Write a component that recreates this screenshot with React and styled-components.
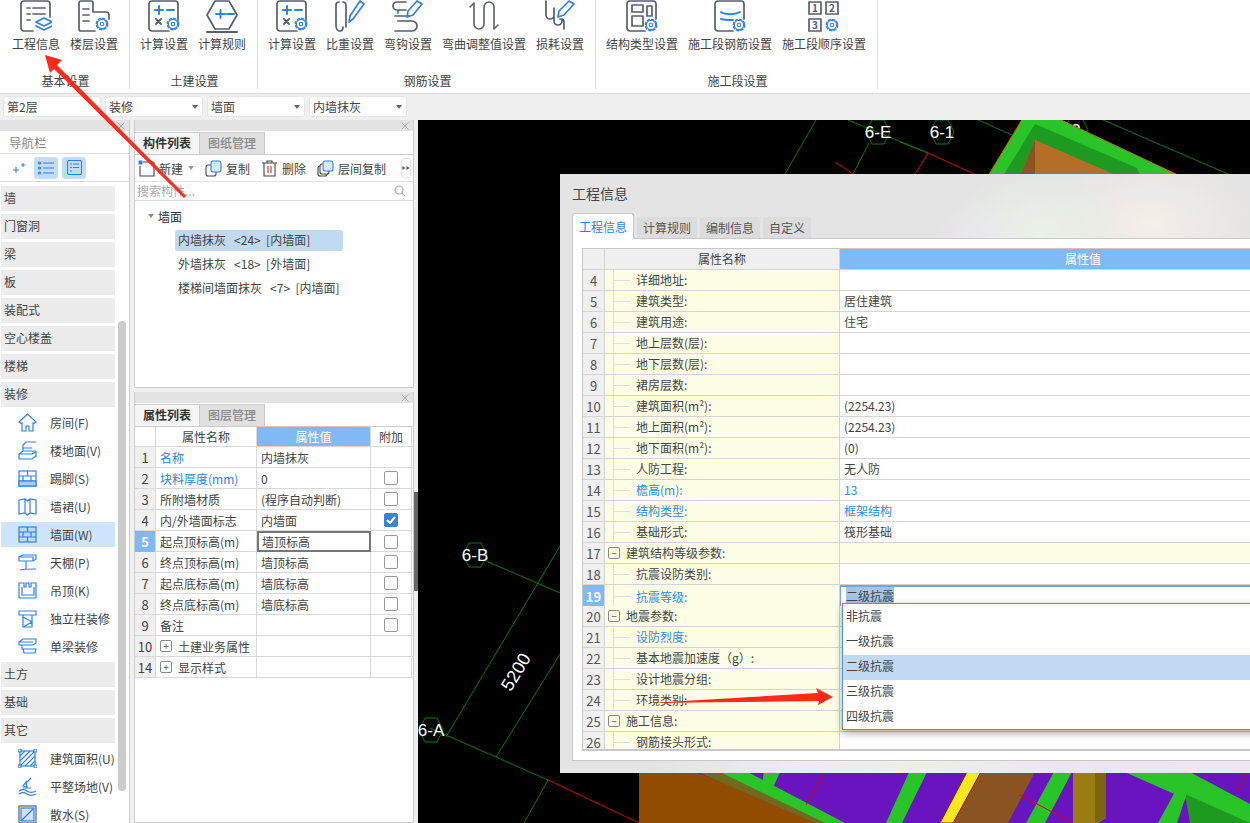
import { createGlobalStyle, styled } from "styled-components"

const DARK = "#575e6e"
const BLUE = "#2f80ed"
const FONT = `"Noto Sans CJK SC", "Liberation Sans", sans-serif`

const GlobalStyle = createGlobalStyle`
    html, body {
        margin: 0;
        padding: 0;
        background: #f0f0f0;
    }
    * {
        box-sizing: border-box;
    }
`

const Page = styled.div`
    position: relative;
    width: 1250px;
    height: 823px;
    overflow: hidden;
    display: flex;
    flex-direction: column;
    font-family: ${FONT};
    font-size: 12px;
    color: #333;
    background: #f0f0f0;
`

/* ribbon */
const Ribbon = styled.div`
    height: 94px;
    flex: none;
    display: flex;
    background: #fff;
    border-bottom: 1px solid #dcdcdc;
`

const RibbonGroup = styled.div`
    width: ${(props) => props.$width}px;
    height: 89px;
    flex: none;
    display: flex;
    flex-direction: column;
    border-right: 1px solid #dcdcdc;
    padding-left: ${(props) => props.$pad}px;
`

const RibbonItems = styled.div`
    display: flex;
    height: 73px;
`

const RibbonItem = styled.div`
    display: flex;
    flex-direction: column;
    align-items: center;
    padding: 0 5px;
    white-space: nowrap;
`

const RibbonLabel = styled.span`
    margin-top: 3px;
    line-height: 16px;
    color: #444;
`

const RibbonTitle = styled.div`
    height: 15px;
    line-height: 15px;
    text-align: center;
    color: #444;
    margin-left: ${(props) => 2 - props.$pad}px;
`

const RibbonSvg = styled.svg`
    width: 32px;
    height: 33px;
    display: block;
    fill: none;
    stroke-width: 1.7;
    stroke-linecap: round;
    stroke-linejoin: round;
`

/* filter bar */
const FilterBar = styled.div`
    height: 26px;
    flex: none;
    display: flex;
    gap: 4px;
    padding: 2px 3px 3px;
`

const Select = styled.div`
    width: 98px;
    height: 21px;
    display: flex;
    align-items: center;
    justify-content: space-between;
    padding: 0 4px 0 3px;
    background: #fff;
    border-radius: 3px;
    border: 1px solid #e6e6e6;
    color: #444;
`

const Caret = styled.span`
    width: 0;
    height: 0;
    border-left: 3px solid transparent;
    border-right: 3px solid transparent;
    border-top: 4px solid ${(props) => props.$color || "#666"};
    margin-left: ${(props) => props.$left || 0}px;
    margin-right: ${(props) => props.$right || 0}px;
`

/* work area */
const Work = styled.div`
    flex: 1;
    min-height: 0;
    display: flex;
`

const Nav = styled.div`
    position: relative;
    width: 130px;
    flex: none;
    background: #fff;
    border-right: 1px solid #ccc;
    overflow: hidden;
`

const PanelBar = styled.div`
    height: 11px;
    background: #e3e3e3;
    display: flex;
    justify-content: flex-end;
    align-items: center;
    padding-right: 4px;
`

const CloseSvg = styled.svg`
    width: 8px;
    height: 8px;
    fill: none;
    stroke: #aaa;
    stroke-width: 1;
`

const NavTitle = styled.div`
    height: 23px;
    line-height: 23px;
    padding-left: 9px;
    color: #888;
    font-size: 12.5px;
    border-bottom: 1px solid #ddd;
`

const NavTools = styled.div`
    height: 28px;
    display: flex;
    align-items: center;
    gap: 4px;
    padding-left: 7px;
    border-bottom: 1px solid #ddd;
`

const ToolToggle = styled.div`
    width: 24px;
    height: 22px;
    display: flex;
    align-items: center;
    justify-content: center;
    border-radius: 3px;
    background: ${(props) => (props.$on ? "#c2dcf5" : "transparent")};
    margin-right: ${(props) => props.$gap || 0}px;
`

const NavList = styled.div`
    display: flex;
    flex-direction: column;
    gap: 3px;
    padding: 4px 0 0 1px;
    width: 115px;
`

const NavHead = styled.div`
    height: 25px;
    line-height: 24px;
    padding-left: 3px;
    background: #ececec;
    color: #444;
    white-space: nowrap;
`

const NavItem = styled.div`
    height: 25px;
    display: flex;
    align-items: center;
    gap: 13px;
    padding-left: 17px;
    padding-bottom: 1px;
    white-space: nowrap;
    background: ${(props) => (props.$active ? "#cfe5fd" : "transparent")};
    color: #444;
`

const NavSvg = styled.svg`
    width: 19px;
    height: 19px;
    flex: none;
    fill: none;
    stroke: ${BLUE};
    stroke-width: 1.2;
`

const NavScroll = styled.div`
    position: absolute;
    left: 118px;
    top: 201px;
    width: 8px;
    height: 470px;
    border-radius: 4px;
    background: #cbcbcb;
`

const Middle = styled.div`
    width: 280px;
    flex: none;
    margin-left: 4px;
    display: flex;
    flex-direction: column;
    gap: 4px;
`

const Panel = styled.div`
    background: #fff;
    border: 1px solid #ccc;
    border-top: none;
    height: ${(props) => props.$height}px;
    overflow: hidden;
`

const Tabs = styled.div`
    height: 23px;
    display: flex;
    background: #fff;
    border-bottom: 1px solid #ccc;
    margin-top: 1px;
`

const Tab = styled.div`
    width: 65px;
    height: 22px;
    line-height: 20px;
    text-align: center;
    font-size: 12px;
    font-weight: ${(props) => (props.$active ? 700 : 500)};
    color: ${(props) => (props.$active ? "#333" : "#8a8a8a")};
    background: ${(props) => (props.$active ? "#f5f5f5" : "#e0e0e0")};
    border-right: 1px solid #ccc;
    border-top: 1px solid #ccc;
`

const ToolRow = styled.div`
    height: 27px;
    display: flex;
    align-items: center;
    padding-left: 3px;
    white-space: nowrap;
    color: #444;
    border-bottom: 1px solid #e2e2e2;
`

const Tool = styled.div`
    display: flex;
    align-items: center;
    gap: 4px;
    margin-right: ${(props) => props.$gap}px;
`

const ToolSvg = styled.svg`
    width: 17px;
    height: 17px;
    fill: none;
    stroke-width: 1.1;
`

const MoreButton = styled.svg`
    width: 10px;
    height: 20px;
    border: 1px solid #e4e4e4;
    border-radius: 3px;
    fill: #555;
`

const Search = styled.div`
    height: 19px;
    display: flex;
    align-items: center;
    justify-content: space-between;
    padding: 0 8px 2px 2px;
    color: #aaa;
    font-size: 12px;
    border-bottom: 1px solid #ddd;
`

const Tree = styled.div`
    display: flex;
    flex-direction: column;
    padding: 3px 0 0 13px;
`

const TreeRoot = styled.div`
    height: 24px;
    display: flex;
    align-items: center;
    gap: 4px;
`

const TreeItem = styled.div`
    width: 168px;
    height: 21px;
    margin: 2px 0 1px 27px;
    padding-left: 3px;
    line-height: 20px;
    border-radius: 3px;
    white-space: pre;
    color: #444;
    background: ${(props) => (props.$active ? "#c2d9f2" : "transparent")};
`

const PropRow = styled.div`
    display: grid;
    grid-template-columns: 21px 101px 114px 41px;
    height: ${(props) => props.$height || 21}px;
    border-bottom: 1px solid #d8d8d8;
`

const PropCell = styled.div`
    display: flex;
    align-items: center;
    justify-content: ${(props) => (props.$center ? "center" : "flex-start")};
    padding-left: ${(props) => (props.$center ? 0 : 4)}px;
    border-right: 1px solid #d8d8d8;
    white-space: nowrap;
    color: ${(props) => (props.$blue ? BLUE : "#444")};
    background: ${(props) => (props.$head ? "#7fbaf7" : "transparent")};
    ${(props) => props.$head && "color: #fff;"}
    ${(props) => props.$focus && "border: 2px solid #777; padding-left: 3px;"}
`

const NumCell = styled.div`
    display: flex;
    align-items: center;
    justify-content: center;
    font-size: 13px;
    background: ${(props) => (props.$active ? "#7fbaf7" : "#f0f0f0")};
    color: ${(props) => (props.$active ? "#fff" : "#444")};
    font-weight: ${(props) => (props.$active ? 700 : 400)};
    border-right: 1px solid #d8d8d8;
`

const Check = styled.span`
    width: 14px;
    height: 14px;
    display: flex;
    align-items: center;
    justify-content: center;
    border-radius: 2px;
    border: 1px solid ${(props) => (props.$on ? "#3b82d6" : "#999")};
    background: ${(props) => (props.$on ? "#3b82d6" : "#fff")};
`

const ExpandBox = styled.span`
    width: 12px;
    height: 12px;
    flex: none;
    display: flex;
    align-items: center;
    justify-content: center;
    border: 1px solid #888;
    border-radius: 2px;
    font-size: 10px;
    line-height: 10px;
    color: #555;
    background: ${(props) => props.$bg || "#fff"};
    margin-right: ${(props) => props.$gap}px;
    margin-left: ${(props) => props.$left}px;
`

const Splitter = styled.div`
    width: 4px;
    flex: none;
    display: flex;
    align-items: center;
    margin-top: 372px;
    height: 99px;
    background: #666;
`

/* canvas and dialog */
const Canvas = styled.div`
    position: relative;
    flex: 1;
    background: #000;
    overflow: hidden;
`

const CanvasSvg = styled.svg`
    display: block;
    width: 832px;
    height: 703px;
`

const Dialog = styled.div`
    position: absolute;
    left: 142px;
    top: 54px;
    width: 800px;
    height: 599px;
    padding-top: 10px;
    background-color: #e4e4e4;
    background-image:
        linear-gradient(90deg, transparent 12%, #f0eaf4 30%, #efefe6 45%, #ece6f2 62%, #eee8f2 100%),
        radial-gradient(ellipse 90px 70px at 480px 60px, #e9f2e6 0%, transparent 100%),
        radial-gradient(ellipse 110px 70px at 590px 50px, #f5eee8 0%, transparent 100%),
        radial-gradient(ellipse 70px 40px at 440px 65px, #ece4f4 0%, transparent 100%);
    background-repeat: no-repeat;
    background-size: 100% 12px, 100% 100%, 100% 100%, 100% 100%;
    background-position: bottom, 0 0, 0 0, 0 0;
`

const DialogTitle = styled.div`
    height: 18px;
    line-height: 18px;
    margin-left: 12px;
    font-size: 14px;
    color: #444;
`

const DialogTabs = styled.div`
    display: flex;
    align-items: flex-end;
    gap: 3px;
    height: 25px;
    margin: 12px 0 0 12px;
    border-bottom: 1px solid #c8c8c8;
`

const DialogTab = styled.div`
    padding: 0 6px;
    height: ${(props) => (props.$active ? 25 : 21)}px;
    line-height: ${(props) => (props.$active ? 25 : 21)}px;
    background: ${(props) => (props.$active ? "#fff" : "#dcdcdc")};
    color: ${(props) => (props.$active ? BLUE : "#555")};
    border-radius: 3px 3px 0 0;
    ${(props) => props.$active && "border: 1px solid #c8c8c8; border-bottom: none; margin-bottom: -1px; height: 26px;"}
`

const DialogBody = styled.div`
    height: 522px;
    margin-left: 12px;
    padding: 9px 0 0 9px;
    background: #fff;
    border-bottom: 1px solid #c8c8c8;
    border-left: 1px solid #c8c8c8;
`

const InfoTable = styled.div`
    width: 740px;
    height: 503px;
    overflow: hidden;
    border-top: 1px solid #c8c8c8;
    border-left: 1px solid #c8c8c8;
    border-bottom: 2px solid #c8c8c8;
`

const InfoRow = styled.div`
    display: grid;
    grid-template-columns: 22px 235px 1fr;
    height: 21px;
    flex: none;
    border-bottom: 1px solid #d4d4d4;
`

const InfoNum = styled.div`
    display: flex;
    align-items: center;
    justify-content: center;
    font-size: 13px;
    background: ${(props) => (props.$active ? "#7fbaf7" : "#f0f0f0")};
    color: ${(props) => (props.$active ? "#fff" : "#555")};
    font-weight: ${(props) => (props.$active ? 700 : 400)};
    border-right: 1px solid #d4d4d4;
`

const InfoName = styled.div`
    display: flex;
    align-items: center;
    line-height: 18px;
    background: ${(props) => (props.$head ? "#f0f0f0" : "#fefde6")};
    justify-content: ${(props) => (props.$head ? "center" : "flex-start")};
    border-right: 1px solid #d4d4d4;
    color: ${(props) => (props.$blue ? "#2a8cf0" : "#444")};
    white-space: nowrap;
`

const TreeGuide = styled.span`
    width: 17px;
    height: 100%;
    flex: none;
    margin: 0 6px 0 8px;
    border-left: 1px solid #e4e2cc;
    background: linear-gradient(#ddd, #ddd) no-repeat center / 100% 1px;
`

const InfoValue = styled.div`
    display: flex;
    align-items: center;
    justify-content: ${(props) => (props.$head ? "center" : "flex-start")};
    padding-left: 4px;
    padding-bottom: 1px;
    white-space: nowrap;
    color: ${(props) => (props.$head ? "#fff" : props.$blue ? "#2a8cf0" : "#444")};
    background: ${(props) => (props.$head ? "#7fbaf7" : props.$group ? "#fefde6" : "#fff")};
    ${(props) => props.$editing && "border-top: 2px solid #6fa8e0; border-left: 1px solid #6fa8e0; padding-left: 5px; padding-bottom: 4px;"}
`

const Selected = styled.span`
    background: #a4c4ea;
    color: #444;
`

const Dropdown = styled.div`
    position: absolute;
    left: 282px;
    top: 429px;
    width: 520px;
    height: 127px;
    padding: 1px 0;
    background: #fff;
    border: 1px solid #4a9cc8;
    box-shadow: 0 3px 8px rgba(0, 0, 0, 0.35);
`

const DropdownItem = styled.div`
    height: 25px;
    line-height: 22px;
    padding-left: 3px;
    color: #444;
    background: ${(props) => (props.$active ? "#c2d9f2" : "transparent")};
`

const ArrowLayer = styled.svg`
    position: absolute;
    left: 0;
    top: 0;
    width: 1250px;
    height: 823px;
    pointer-events: none;
`

const Gear = ({ x, y }) => (
    <g stroke={BLUE} fill="#fff">
        <circle cx={x} cy={y} r="5.6" strokeWidth="1.6" strokeDasharray="2.2 2.2" />
        <circle cx={x} cy={y} r="4.6" strokeWidth="1.1" />
        <circle cx={x} cy={y} r="1.8" strokeWidth="1.1" />
    </g>
)

const CalcIcon = () => (
    <RibbonSvg viewBox="0 0 32 33">
        <path d="M21 31H4a3 3 0 0 1-3-3V4a3 3 0 0 1 3-3h23a3 3 0 0 1 3 3v16" stroke={DARK} />
        <path d="M7 10h8M11 6v8M19 10h7" stroke={BLUE} strokeWidth="2" />
        <path d="M8 19l5 5M13 19l-5 5" stroke={DARK} strokeWidth="2" />
        <Gear x={25} y={24} />
    </RibbonSvg>
)

const icons = {
    info: (
        <RibbonSvg viewBox="0 0 32 33">
            <path d="M13 31H4a3 3 0 0 1-3-3V4a3 3 0 0 1 3-3h23a3 3 0 0 1 3 3v13" stroke={DARK} />
            <path d="M7 8h3M13 8h12M7 14h3M13 14h12M7 20h3" stroke={DARK} />
            <path d="M16 22l8-4 8 4-8 4zM16 26l8 4 8-4" stroke={BLUE} fill="#fff" />
        </RibbonSvg>
    ),
    floor: (
        <RibbonSvg viewBox="0 0 32 33">
            <path d="M17 31H3a2 2 0 0 1-2-2V3a2 2 0 0 1 2-2h10a2 2 0 0 1 2 2v9h13a3 3 0 0 1 3 3v4" stroke={DARK} />
            <path d="M5 9h6M5 15h6M5 21h6" stroke={DARK} />
            <Gear x={24} y={24} />
        </RibbonSvg>
    ),
    calc: <CalcIcon />,
    rule: (
        <RibbonSvg viewBox="0 0 32 33">
            <path d="M9 1h14l8 14-8 14H9L1 15z" stroke={DARK} />
            <path d="M10 14h9M14.500 10v8M21 14h7" stroke={BLUE} strokeWidth="2" />
            <path d="M1 32h30" stroke={DARK} strokeWidth="2" />
        </RibbonSvg>
    ),
    weight: (
        <RibbonSvg viewBox="0 0 32 33">
            <path d="M5 2c-3 0-3 2-3 4v20c0 3 2 5 4 5s3-2 3-4M9 2c3 0 3 2 3 4v21" stroke={DARK} />
            <path d="M17 24l1-6L28 3l4 3-11 15z" stroke={BLUE} transform="translate(-2 -2)" />
        </RibbonSvg>
    ),
    hook: (
        <RibbonSvg viewBox="0 0 32 33">
            <path d="M14 2H5a3 3 0 0 0 0 8h9M3 16h14M6 21h14a4 4 0 0 1 0 10H3" stroke={DARK} />
            <path d="M15 17l1-6L25 1l5 3-9 11z" stroke={BLUE} />
            <path d="M6 13v-3" stroke={BLUE} />
        </RibbonSvg>
    ),
    bend: (
        <RibbonSvg viewBox="0 0 32 33">
            <path d="M2 7l4-4v21a5 5 0 0 0 10 0V7a5 5 0 0 1 10 0v22l4-4" stroke={DARK} strokeWidth="1.6" />
        </RibbonSvg>
    ),
    loss: (
        <RibbonSvg viewBox="0 0 32 33">
            <path d="M2 1v14a4 4 0 0 0 8 0V8M10 8v13a4 4 0 0 0 8 0v-2M16 19h1a3 3 0 0 1 3 3v7" stroke={DARK} />
            <path d="M14 17l1-6L25 1l5 3-10 11z" stroke={BLUE} />
        </RibbonSvg>
    ),
    struct: (
        <RibbonSvg viewBox="0 0 32 33">
            <path d="M19 31H4a3 3 0 0 1-3-3V4a3 3 0 0 1 3-3h23a3 3 0 0 1 3 3v15" stroke={DARK} />
            <rect x="6" y="5" width="11" height="7" stroke={DARK} />
            <rect x="6" y="16" width="11" height="10" stroke={DARK} />
            <rect x="21" y="6" width="5" height="10" stroke={DARK} />
            <Gear x={25} y={25} />
        </RibbonSvg>
    ),
    rebar: (
        <RibbonSvg viewBox="0 0 32 33">
            <path d="M19 31H4a3 3 0 0 1-3-3V4a3 3 0 0 1 3-3h23a3 3 0 0 1 3 3v15" stroke={DARK} />
            <path d="M7 12c4 3 14 3 19 0M7 19c4 1 9 1 12 1" stroke={BLUE} strokeWidth="2" />
            <Gear x={25} y={25} />
        </RibbonSvg>
    ),
    order: (
        <RibbonSvg viewBox="0 0 32 33">
            <rect x="1" y="2" width="12" height="12" stroke={DARK} />
            <rect x="18" y="2" width="12" height="12" stroke={DARK} />
            <rect x="1" y="19" width="12" height="12" stroke={DARK} />
            <text x="7" y="12" fontSize="10" textAnchor="middle" fill={DARK} fontWeight="700">1</text>
            <text x="24" y="12" fontSize="10" textAnchor="middle" fill={DARK} fontWeight="700">2</text>
            <text x="7" y="29" fontSize="10" textAnchor="middle" fill={DARK} fontWeight="700">3</text>
            <Gear x={24} y={25} />
        </RibbonSvg>
    ),
}

const ribbonGroups = [
    { title: "基本设置", width: 130, pad: 7, items: [["工程信息", "info"], ["楼层设置", "floor"]] },
    { title: "土建设置", width: 128, pad: 5, items: [["计算设置", "calc"], ["计算规则", "rule"]] },
    {
        title: "钢筋设置",
        width: 338,
        pad: 5,
        items: [["计算设置", "calc"], ["比重设置", "weight"], ["弯钩设置", "hook"], ["弯曲调整值设置", "bend"], ["损耗设置", "loss"]],
    },
    {
        title: "施工段设置",
        width: 282,
        pad: 5,
        items: [["结构类型设置", "struct"], ["施工段钢筋设置", "rebar"], ["施工段顺序设置", "order"]],
    },
]

const navIcons = {
    room: <path d="M9.500 1L1 9l2 1.500L4 10v8h4v-5h3v5h4v-8l1 .5L18 9z" />,
    floor: <path d="M1 18v-5h13l4-2v4l-4 3zM1 13l4-3h13M5 10V4l3-3h10M5 7h9" />,
    skirt: (
        <>
            <rect x="1" y="2" width="17" height="15" />
            <path d="M1 7h17M1 12h17M9.500 2v5M5 7v5M13 7v5" />
            <rect x="1" y="12" width="17" height="5" fill="#a9cdf5" />
        </>
    ),
    dado: <path d="M1 3l6-1 2.500 2 2.500-2 6 1v14l-6-1-2.500 2-2.500-2-6 1zM7 2v14M12 2v14" />,
    wall: (
        <>
            <rect x="1" y="2" width="17" height="15" fill="#bcd9f8" />
            <path d="M1 7h17M1 12h17M9.500 2v5M5 7v5M13 7v5M9.500 12v5" />
        </>
    ),
    ceiling: <path d="M1 4l4-2h13v4l-3 2H1zM1 4h14v4M8 8v8M2 17c3-1 10-1 16-1" />,
    drop: <path d="M1 2h5v4h2V2h3v4h2V2h5v15H1zM4 6v8h12V6" />,
    column: <path d="M1 2h17v4H1zM5 6v12h9V6M5 8l9 5-9 5" />,
    beam: <path d="M1 5l4-3h13v4l-3 2H1zM1 5h14M4 8v4h14l-1 4H6l-1-4" />,
    area: (
        <>
            <rect x="2" y="2" width="15" height="15" />
            <path d="M2 7l5-5M2 12l10-10M2 17L17 2M7 17l10-10M12 17l5-5" />
            <path d="M0 0h3v3H0zM16 0h3v3h-3zM0 16h3v3H0zM16 16h3v3h-3z" fill="#fff" />
        </>
    ),
    site: <path d="M13 1L7 7M8 5l-3 4 4 1zM1 14c3-2 5-2 8 0s5 2 9 0M1 17c3-2 5-2 8 0s5 2 9 0M5 11h8" />,
    apron: (
        <>
            <rect x="1" y="1" width="17" height="17" stroke={DARK} />
            <rect x="3" y="3" width="13" height="13" fill="#cfe3fb" />
            <path d="M3 16L16 3" />
        </>
    ),
}

const NavIcon = ({ name }) => <NavSvg viewBox="0 0 19 19">{navIcons[name]}</NavSvg>

const navData = [
    { head: "墙" },
    { head: "门窗洞" },
    { head: "梁" },
    { head: "板" },
    { head: "装配式" },
    { head: "空心楼盖" },
    { head: "楼梯" },
    { head: "装修" },
    { name: "房间(F)", icon: "room" },
    { name: "楼地面(V)", icon: "floor" },
    { name: "踢脚(S)", icon: "skirt" },
    { name: "墙裙(U)", icon: "dado" },
    { name: "墙面(W)", icon: "wall", active: true },
    { name: "天棚(P)", icon: "ceiling" },
    { name: "吊顶(K)", icon: "drop" },
    { name: "独立柱装修", icon: "column" },
    { name: "单梁装修", icon: "beam" },
    { head: "土方" },
    { head: "基础" },
    { head: "其它" },
    { name: "建筑面积(U)", icon: "area" },
    { name: "平整场地(V)", icon: "site" },
    { name: "散水(S)", icon: "apron" },
]

const propData = [
    { no: 1, name: "名称", value: "内墙抹灰", blue: true },
    { no: 2, name: "块料厚度(mm)", value: "0", blue: true, check: false },
    { no: 3, name: "所附墙材质", value: "(程序自动判断)", check: false },
    { no: 4, name: "内/外墙面标志", value: "内墙面", check: true },
    { no: 5, name: "起点顶标高(m)", value: "墙顶标高", check: false, active: true },
    { no: 6, name: "终点顶标高(m)", value: "墙顶标高", check: false },
    { no: 7, name: "起点底标高(m)", value: "墙底标高", check: false },
    { no: 8, name: "终点底标高(m)", value: "墙底标高", check: false },
    { no: 9, name: "备注", value: "", check: false },
    { no: 10, name: "土建业务属性", group: true },
    { no: 14, name: "显示样式", group: true },
]

const infoData = [
    { no: 4, name: "详细地址:" },
    { no: 5, name: "建筑类型:", value: "居住建筑" },
    { no: 6, name: "建筑用途:", value: "住宅" },
    { no: 7, name: "地上层数(层):" },
    { no: 8, name: "地下层数(层):" },
    { no: 9, name: "裙房层数:" },
    { no: 10, name: "建筑面积(m²):", value: "(2254.23)" },
    { no: 11, name: "地上面积(m²):", value: "(2254.23)" },
    { no: 12, name: "地下面积(m²):", value: "(0)" },
    { no: 13, name: "人防工程:", value: "无人防" },
    { no: 14, name: "檐高(m):", value: "13", blue: true },
    { no: 15, name: "结构类型:", value: "框架结构", blue: true },
    { no: 16, name: "基础形式:", value: "筏形基础" },
    { no: 17, name: "建筑结构等级参数:", group: true },
    { no: 18, name: "抗震设防类别:" },
    { no: 19, name: "抗震等级:", blue: true, editing: true },
    { no: 20, name: "地震参数:", group: true },
    { no: 21, name: "设防烈度:", blue: true },
    { no: 22, name: "基本地震加速度（g）:" },
    { no: 23, name: "设计地震分组:" },
    { no: 24, name: "环境类别:" },
    { no: 25, name: "施工信息:", group: true },
    { no: 26, name: "钢筋接头形式:" },
]

const Hex = ({ x, y, r, label }) => (
    <g>
        <path
            d={`M${x - r} ${y}l${r * 0.5} ${-r}h${r}l${r * 0.5} ${r}l${-r * 0.5} ${r}h${-r}z`}
            stroke="#0b7a0b"
            fill="none"
        />
        <text x={x} y={y + 6} fill="#fff" fontSize="17" textAnchor="middle" fontFamily="Liberation Sans, sans-serif">
            {label}
        </text>
    </g>
)

const SceneDrawing = () => (
    <CanvasSvg viewBox="418 120 832 703">
        <g stroke="#0b7a0b" strokeWidth="1" fill="none">
            <path d="M816 120L785 174M869 143L853 174M848 120L928 153M900 142L928 153M978 120L1012 135M1103 120L1228 174" />
            <path d="M486 561L560 593M560 546L446 737M560 654L496 757M430 728L548 780L524 823" />
        </g>
        <g stroke="#e00000" strokeWidth="1" fill="none">
            <path d="M928 153L915 174M928 153L974 174M835 162L853 174M548 780L639 823" />
        </g>
        <Hex x={878} y={132} r={12} label="6-E" />
        <Hex x={942} y={132} r={12} label="6-1" />
        <Hex x={1076} y={130} r={12} label="3" />
        <Hex x={475} y={555} r={12} label="6-B" />
        <Hex x={431} y={730} r={12} label="6-A" />
        <text
            x="516"
            y="678"
            fill="#fff"
            fontSize="18"
            textAnchor="middle"
            fontFamily="Liberation Sans, sans-serif"
            transform="rotate(-59 516 672)"
        >
            5200
        </text>

        <path d="M1023 118L1057 118L1180 176L988 176Z" fill="#28c428" stroke="#c86a10" />
        <path d="M1035 124L1137 168L1140 176L1003 176Z" fill="#1f9a20" />
        <path d="M1035 140L1118 176L1020 176Z" fill="#b56e28" />
        <path d="M1020 176L1035 140V176Z" fill="#8c5420" />

        <path d="M639 760H1250V823H639Z" fill="#6a14c0" />
        <path d="M639 760H660L840 823H639Z" fill="#914c00" />
        <path d="M670 760H700L840 823H815Z" fill="#6e6a20" />
        <path d="M695 760H725L845 823H825Z" fill="#28c428" />
        <path d="M764 770H781L771 792H761Z" fill="#28c428" />
        <path d="M910 770H928L902 823H886Z" fill="#28c428" />
        <path d="M982 770H1036L1008 823H953Z" fill="#8a5420" />
        <path d="M968 770H982L953 823H940Z" fill="#ffe820" stroke="#a01010" />
        <path d="M1055 770H1073L1045 823H1026Z" fill="#28c428" />
        <path d="M1073 770H1106V818L1098 823H1073Z" fill="#9a7d10" />
        <path d="M1095 770H1106V818L1095 823Z" fill="#7a6510" />
        <path d="M1120 770H1186L1250 804V823H1240Z" fill="#28c428" />
        <path d="M1185 794L1250 823H1190Z" fill="#1f9a20" />
        <path d="M1176 790H1188L1177 823H1158Z" fill="#28c428" />
        <path d="M824 773L806 805M1020 795L1073 823M1245 773L1238 790" stroke="#e00000" fill="none" />
    </CanvasSvg>
)

const CloseIcon = () => (
    <CloseSvg viewBox="0 0 8 8">
        <path d="M0.500 0.500l7 7M7.500 0.500l-7 7" />
    </CloseSvg>
)

export default () => {
    return (
        <Page>
            <GlobalStyle />
            <Ribbon>
                {ribbonGroups.map((group) => (
                    <RibbonGroup key={group.title} $width={group.width} $pad={group.pad}>
                        <RibbonItems>
                            {group.items.map(([label, icon]) => (
                                <RibbonItem key={label}>
                                    {icons[icon]}
                                    <RibbonLabel>{label}</RibbonLabel>
                                </RibbonItem>
                            ))}
                        </RibbonItems>
                        <RibbonTitle $pad={group.pad}>{group.title}</RibbonTitle>
                    </RibbonGroup>
                ))}
            </Ribbon>

            <FilterBar>
                <Select>第2层</Select>
                <Select>装修<Caret /></Select>
                <Select>墙面<Caret /></Select>
                <Select>内墙抹灰<Caret /></Select>
            </FilterBar>

            <Work>
                <Nav>
                    <PanelBar><CloseIcon /></PanelBar>
                    <NavTitle>导航栏</NavTitle>
                    <NavTools>
                        <ToolToggle $gap={-1}>
                            <svg width="12" height="12" viewBox="0 0 12 12" fill="none" stroke={BLUE} strokeWidth="1.1">
                                <path d="M0 8h6M3 5v6M8 3h4M10 1v4" />
                            </svg>
                        </ToolToggle>
                        <ToolToggle $on>
                            <svg width="16" height="14" viewBox="0 0 16 14" fill="none" stroke={BLUE} strokeWidth="1.2">
                                <path d="M5 2h11M5 7h11M5 12h11" />
                                <circle cx="1.500" cy="2" r="1" />
                                <circle cx="1.500" cy="7" r="1" />
                                <circle cx="1.500" cy="12" r="1" />
                            </svg>
                        </ToolToggle>
                        <ToolToggle $on>
                            <svg width="15" height="15" viewBox="0 0 15 15" fill="none" stroke={BLUE} strokeWidth="1.1">
                                <rect x="0.500" y="0.500" width="14" height="14" rx="1.500" />
                                <path d="M3 4h2M6 4h6M3 7.500h2M6 7.500h6M3 11h2" />
                            </svg>
                        </ToolToggle>
                    </NavTools>
                    <NavList>
                        {navData.map((item) =>
                            item.head ? (
                                <NavHead key={item.head}>{item.head}</NavHead>
                            ) : (
                                <NavItem key={item.name} $active={item.active}>
                                    <NavIcon name={item.icon} />
                                    {item.name}
                                </NavItem>
                            )
                        )}
                    </NavList>
                    <NavScroll />
                </Nav>

                <Middle>
                    <Panel $height={268}>
                        <PanelBar><CloseIcon /></PanelBar>
                        <Tabs>
                            <Tab $active>构件列表</Tab>
                            <Tab>图纸管理</Tab>
                        </Tabs>
                        <ToolRow>
                            <Tool $gap={5}>
                                <ToolSvg viewBox="0 0 17 17">
                                    <path d="M5 2h10a1 1 0 0 1 1 1v13H2V6" stroke="#444" />
                                    <rect x="0.500" y="0.500" width="4" height="4" fill={BLUE} />
                                </ToolSvg>
                                新建
                            </Tool>
                            <Caret $color="#999" $right={11} />
                            <Tool $gap={11}>
                                <ToolSvg viewBox="0 0 17 17">
                                    <rect x="1" y="5" width="10" height="11" rx="2" stroke="#444" />
                                    <rect x="6" y="1" width="10" height="11" rx="2" stroke={BLUE} fill="#d8e9fb" />
                                </ToolSvg>
                                复制
                            </Tool>
                            <Tool $gap={11}>
                                <ToolSvg viewBox="0 0 17 17">
                                    <path d="M1 3h15M6 3V1h5v2M3 3v13h11V3" stroke="#444" />
                                    <path d="M7 6v7M10 6v7" stroke="#d03030" />
                                </ToolSvg>
                                删除
                            </Tool>
                            <Tool $gap={15}>
                                <ToolSvg viewBox="0 0 17 17">
                                    <rect x="1" y="6" width="9" height="10" rx="2" stroke="#444" />
                                    <rect x="3" y="4" width="9" height="10" rx="2" stroke="#444" fill="#fff" />
                                    <rect x="6" y="1" width="10" height="10" rx="2" stroke={BLUE} fill="#d8e9fb" />
                                </ToolSvg>
                                层间复制
                            </Tool>
                            <MoreButton viewBox="0 0 8 18">
                                <path d="M0.500 7l3 2-3 2zM4.500 7l3 2-3 2z" />
                            </MoreButton>
                        </ToolRow>
                        <Search>
                            搜索构件...
                            <svg width="11" height="11" viewBox="0 0 11 11" fill="none" stroke="#aaa" strokeWidth="1.2">
                                <circle cx="5" cy="5" r="4" />
                                <path d="M8 8l3 3" />
                            </svg>
                        </Search>
                        <Tree>
                            <TreeRoot>
                                <Caret $color="#888" />
                                墙面
                            </TreeRoot>
                            <TreeItem $active>{"内墙抹灰   <24>  [内墙面]"}</TreeItem>
                            <TreeItem>{"外墙抹灰   <18>  [外墙面]"}</TreeItem>
                            <TreeItem>{"楼梯间墙面抹灰   <7>  [内墙面]"}</TreeItem>
                        </Tree>
                    </Panel>

                    <Panel $height={431}>
                        <PanelBar><CloseIcon /></PanelBar>
                        <Tabs>
                            <Tab $active>属性列表</Tab>
                            <Tab>图层管理</Tab>
                        </Tabs>
                        <PropRow $height={20}>
                            <PropCell />
                            <PropCell $center>属性名称</PropCell>
                            <PropCell $center $head>属性值</PropCell>
                            <PropCell $center>附加</PropCell>
                        </PropRow>
                        {propData.map((row) => (
                            <PropRow key={row.no}>
                                <NumCell $active={row.active}>{row.no}</NumCell>
                                <PropCell $blue={row.blue}>
                                    {row.group && <ExpandBox $gap={6} $left={0}>+</ExpandBox>}
                                    {row.name}
                                </PropCell>
                                <PropCell $focus={row.active}>{row.value}</PropCell>
                                <PropCell $center>
                                    {row.check !== undefined && (
                                        <Check $on={row.check}>
                                            {row.check && (
                                                <svg width="10" height="8" viewBox="0 0 10 8" fill="none" stroke="#fff" strokeWidth="2">
                                                    <path d="M1 4l3 3 5-6" />
                                                </svg>
                                            )}
                                        </Check>
                                    )}
                                </PropCell>
                            </PropRow>
                        ))}
                    </Panel>
                </Middle>

                <Splitter />

                <Canvas>
                    <SceneDrawing />
                    <Dialog>
                        <DialogTitle>工程信息</DialogTitle>
                        <DialogTabs>
                            <DialogTab $active>工程信息</DialogTab>
                            <DialogTab>计算规则</DialogTab>
                            <DialogTab>编制信息</DialogTab>
                            <DialogTab>自定义</DialogTab>
                        </DialogTabs>
                        <DialogBody>
                            <InfoTable>
                                <InfoRow>
                                    <InfoNum />
                                    <InfoName $head>属性名称</InfoName>
                                    <InfoValue $head>属性值</InfoValue>
                                </InfoRow>
                                {infoData.map((row) => (
                                    <InfoRow key={row.no}>
                                        <InfoNum $active={row.editing}>{row.no}</InfoNum>
                                        <InfoName $blue={row.blue}>
                                            {row.group ? <ExpandBox $gap={6} $left={3} $bg="#fefde6">−</ExpandBox> : <TreeGuide />}
                                            {row.name}
                                        </InfoName>
                                        <InfoValue $blue={row.blue} $group={row.group} $editing={row.editing}>
                                            {row.editing ? <Selected>二级抗震</Selected> : row.value}
                                        </InfoValue>
                                    </InfoRow>
                                ))}
                            </InfoTable>
                        </DialogBody>
                        <Dropdown>
                            <DropdownItem>非抗震</DropdownItem>
                            <DropdownItem>一级抗震</DropdownItem>
                            <DropdownItem $active>二级抗震</DropdownItem>
                            <DropdownItem>三级抗震</DropdownItem>
                            <DropdownItem>四级抗震</DropdownItem>
                        </Dropdown>
                    </Dialog>
                </Canvas>
            </Work>

            <ArrowLayer viewBox="0 0 1250 823">
                <path d="M45 55L62 60L57 65L186 196L184 198L54 69L50 73Z" fill="#ff2a1a" />
                <path d="M649 703L818 693L816 688L833 697L818 705L819 701Z" fill="#ff2a1a" />
            </ArrowLayer>
        </Page>
    )
}
